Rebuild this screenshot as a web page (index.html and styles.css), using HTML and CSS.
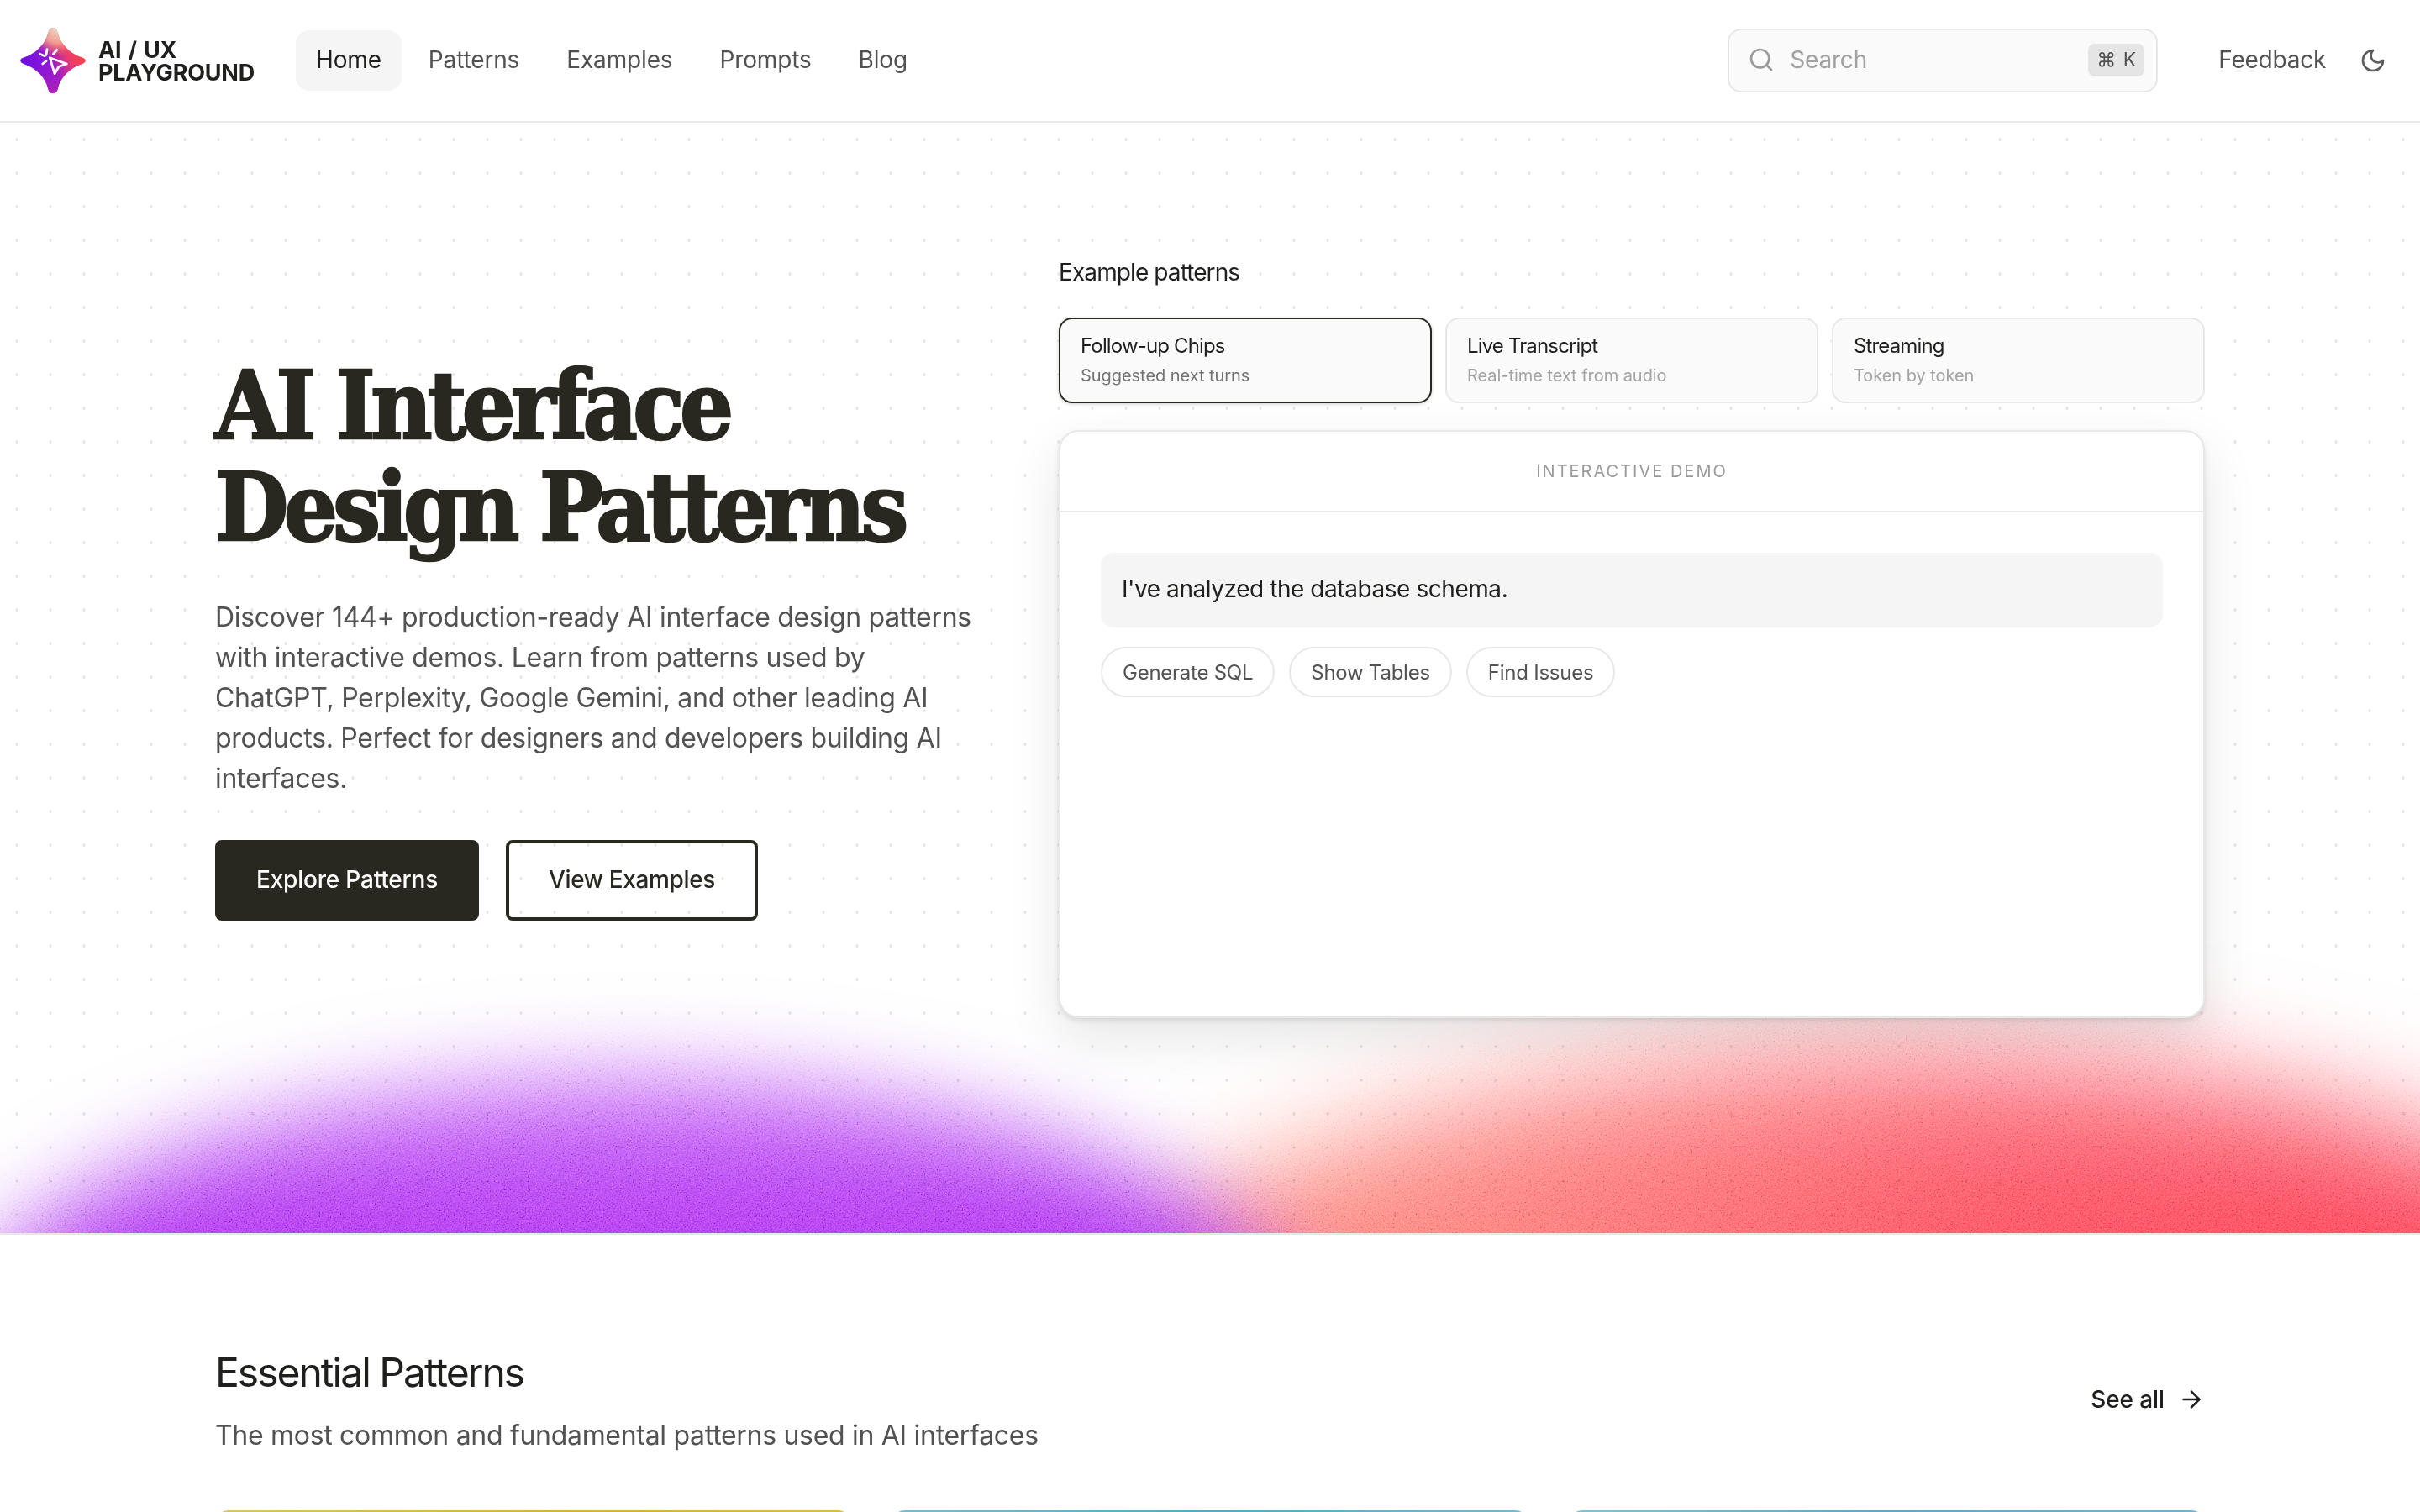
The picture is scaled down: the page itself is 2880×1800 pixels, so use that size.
FILE: index.html
```html
<!DOCTYPE html>
<html lang="en">
<head>
<meta charset="utf-8">
<title>AI / UX Playground</title>
<link rel="stylesheet" href="styles.css">
</head>
<body>
<header class="site-header">
  <a class="logo">
    <svg class="logo-mark" viewBox="0 0 80 80">
      <defs>
        <linearGradient id="lg-base" x1="0" y1="0.75" x2="1" y2="0.3">
          <stop offset="0" stop-color="#6208e0"/>
          <stop offset="0.45" stop-color="#8f18d8"/>
          <stop offset="0.72" stop-color="#e83c70"/>
          <stop offset="1" stop-color="#ff4438"/>
        </linearGradient>
        <linearGradient id="lg-bottom" x1="0.5" y1="1" x2="0.5" y2="0.55">
          <stop offset="0" stop-color="#b020b8"/>
          <stop offset="1" stop-color="#b020b8" stop-opacity="0"/>
        </linearGradient>
        <radialGradient id="lg-top" cx="0.56" cy="0.02" r="0.42">
          <stop offset="0" stop-color="#eadccc"/>
          <stop offset="0.5" stop-color="#f8b090" stop-opacity="0.85"/>
          <stop offset="1" stop-color="#ff7050" stop-opacity="0"/>
        </radialGradient>
      </defs>
      <path id="star" fill="url(#lg-base)" d="M40 1C43 1 45 4 46 8C49 20 60 32 75 36.500C80 38 80 42 75 44C60 49 49 60 46 73C45 77 43 79 40 79C37 79 35 77 34 73C31 60 20 49 5 44C0 42 0 38 5 36.500C20 32 31 20 34 8C35 4 37 1 40 1Z"/>
      <path fill="url(#lg-bottom)" d="M40 1C43 1 45 4 46 8C49 20 60 32 75 36.500C80 38 80 42 75 44C60 49 49 60 46 73C45 77 43 79 40 79C37 79 35 77 34 73C31 60 20 49 5 44C0 42 0 38 5 36.500C20 32 31 20 34 8C35 4 37 1 40 1Z"/>
      <path fill="url(#lg-top)" d="M40 1C43 1 45 4 46 8C49 20 60 32 75 36.500C80 38 80 42 75 44C60 49 49 60 46 73C45 77 43 79 40 79C37 79 35 77 34 73C31 60 20 49 5 44C0 42 0 38 5 36.500C20 32 31 20 34 8C35 4 37 1 40 1Z"/>
      <g fill="none" stroke="#fff" stroke-width="2.800" stroke-linecap="round" stroke-linejoin="round">
        <path d="M36.300 36.700L56.300 44L47 47.300L42 55.700Z"/>
        <path d="M32 33.300L33 26.700M24.300 32.300L30.300 34.700M27.700 44L32 40.700M40.300 32.300L44.700 27.300"/>
      </g>
    </svg>
    <span class="logo-text">AI / UX<br>PLAYGROUND</span>
  </a>
  <nav class="main-nav">
    <a class="nav-link is-active">Home</a>
    <a class="nav-link">Patterns</a>
    <a class="nav-link">Examples</a>
    <a class="nav-link">Prompts</a>
    <a class="nav-link">Blog</a>
  </nav>
  <div class="search">
    <svg class="search-icon" viewBox="0 0 24 24" fill="none" stroke="currentColor" stroke-width="2" stroke-linecap="round" stroke-linejoin="round"><circle cx="11" cy="11" r="8"/><path d="m21 21-4.300-4.300"/></svg>
    <span class="search-placeholder">Search</span>
    <kbd class="search-kbd">⌘ K</kbd>
  </div>
  <a class="feedback">Feedback</a>
  <svg class="theme-icon" viewBox="0 0 24 24" fill="none" stroke="currentColor" stroke-width="2" stroke-linecap="round" stroke-linejoin="round"><path d="M12 3a6 6 0 0 0 9 9 9 9 0 1 1-9-9Z"/></svg>
</header>

<section class="hero">
  <div class="blob blob-red"></div>
  <div class="blob blob-purple"></div>
  <svg class="grain" width="100%" height="100%">
    <filter id="grain-filter" x="0" y="0" width="100%" height="100%"><feTurbulence type="fractalNoise" baseFrequency="0.6" numOctaves="2"/><feColorMatrix type="matrix" values="1.1 1.1 0 0 -0.6  1.1 1.1 0 0 -0.6  1.1 1.1 0 0 -0.6  0 0 0 0 1"/></filter>
    <rect width="100%" height="100%" filter="url(#grain-filter)"/>
  </svg>
  <div class="dots"></div>

  <div class="hero-grid">
    <div class="hero-copy">
      <h1 class="hero-title">AI Interface<br>Design Patterns</h1>
      <p class="hero-lead">Discover 144+ production-ready AI interface design patterns with interactive demos. Learn from patterns used by ChatGPT, Perplexity, Google Gemini, and other leading AI products. Perfect for designers and developers building AI interfaces.</p>
      <div class="hero-actions">
        <a class="btn btn-solid">Explore Patterns</a>
        <a class="btn btn-outline">View Examples</a>
      </div>
    </div>
    <div class="hero-demo">
      <div class="demo-label">Example patterns</div>
      <div class="tabs">
        <div class="tab is-active"><div class="tab-name">Follow-up Chips</div><div class="tab-desc">Suggested next turns</div></div>
        <div class="tab"><div class="tab-name">Live Transcript</div><div class="tab-desc">Real-time text from audio</div></div>
        <div class="tab"><div class="tab-name">Streaming</div><div class="tab-desc">Token by token</div></div>
      </div>
      <div class="demo-card">
        <div class="demo-head">INTERACTIVE DEMO</div>
        <div class="demo-body">
          <div class="bubble">I've analyzed the database schema.</div>
          <div class="chips">
            <span class="chip">Generate SQL</span>
            <span class="chip">Show Tables</span>
            <span class="chip">Find Issues</span>
          </div>
        </div>
      </div>
    </div>
  </div>
</section>

<section class="essentials">
  <div class="section-head">
    <div>
      <h2 class="section-title">Essential Patterns</h2>
      <p class="section-sub">The most common and fundamental patterns used in AI interfaces</p>
    </div>
    <a class="see-all">See all
      <svg class="see-all-icon" viewBox="0 0 24 24" fill="none" stroke="currentColor" stroke-width="2" stroke-linecap="round" stroke-linejoin="round"><path d="M5 12h14"/><path d="m12 5 7 7-7 7"/></svg>
    </a>
  </div>
  <div class="cards">
    <div class="card card-gold"></div>
    <div class="card card-blue"></div>
    <div class="card card-teal"></div>
  </div>
</section>
</body>
</html>
```
FILE: styles.css
```css
* { box-sizing: border-box; }
html, body { margin: 0; height: 100%; overflow: hidden; }
body {
  font-family: Inter, "Liberation Sans", sans-serif;
  color: #1f1f1d;
  background: #fff;
}
a { color: inherit; text-decoration: none; }

.site-header {
  display: flex;
  align-items: center;
  height: 146px;
  padding: 0 40px 0 23px;
  border-bottom: 2px solid #e8e8e8;
  background: #fff;
}
.logo { display: flex; align-items: center; gap: 14px; width: 329px; }
.logo-mark { width: 80px; height: 80px; flex: none; }
.logo-text { margin-top: 2px; font-size: 27px; font-weight: 700; line-height: 27px; letter-spacing: -0.2px; word-spacing: 2px; color: #1f1f1d; }
.main-nav { display: flex; gap: 8px; }
.nav-link {
  display: flex; align-items: center;
  height: 72px; padding: 0 24px 2px;
  border-radius: 16px;
  font-size: 28px; letter-spacing: -0.15px; color: #525252;
}
.nav-link.is-active { background: #f5f5f5; color: #1f1f1d; }

.search {
  display: flex; align-items: center;
  width: 512px; height: 76px;
  margin-left: auto;
  padding: 0 14px 2px 22px;
  border: 2px solid #e8e8e8;
  border-radius: 16px;
  background: #fafafa;
}
.search-icon { width: 32px; height: 32px; color: #9a9a9a; flex: none; }
.search-placeholder { margin-left: 18px; font-size: 28px; letter-spacing: -0.2px; color: #a1a1a1; }
.search-kbd {
  display: flex; align-items: center; justify-content: center;
  width: 67px; height: 39px;
  margin-left: auto;
  border-radius: 8px;
  background: #e5e5e5;
  font-family: Inter, "DejaVu Sans", sans-serif;
  font-size: 23px; word-spacing: 2px; color: #525252;
}
.feedback { margin-left: 72px; margin-bottom: 2px; font-size: 28px; letter-spacing: -0.25px; color: #525252; }
.theme-icon { width: 32px; height: 32px; margin-left: 40px; color: #5c5c5c; flex: none; }

.hero {
  position: relative;
  height: 1322px;
  padding: 160px 256px 0;
  overflow: hidden;
  background: #fff;
}
.blob { position: absolute; border-radius: 50%; }
.blob-red {
  left: 1250px; top: 1100px;
  width: 2000px; height: 900px;
  background:
    linear-gradient(180deg, rgba(255,255,255,0.25) 0%, rgba(255,255,255,0) 24%),
    linear-gradient(90deg, #ff8c78 0%, #ff7a74 22%, #ff4454 55%, #ff3048 100%);
  filter: blur(64px);
}
.blob-purple {
  left: -60px; top: 1135px;
  width: 1624px; height: 700px;
  background: linear-gradient(180deg, #c25ef7 5%, #ab2cf0 27%);
  filter: blur(52px);
}
.grain {
  position: absolute; left: 0; top: 0;
  mix-blend-mode: soft-light;
  opacity: 0.75;
}
.dots {
  position: absolute; inset: 0;
  background-image: radial-gradient(circle at center, rgba(0,0,0,0.11) 0, rgba(0,0,0,0.09) 1.2px, transparent 2.4px);
  background-size: 40px 40px;
}
.hero-grid {
  position: relative;
  display: grid;
  grid-template-columns: 908px 1364px;
  gap: 96px;
  align-items: center;
}
.hero-title {
  margin: 0;
  font-family: "DejaVu Serif Condensed", "DejaVu Serif", serif;
  font-stretch: condensed;
  font-weight: 700;
  font-size: 112px;
  line-height: 121px;
  letter-spacing: -5.6px;
  color: #292820;
  -webkit-text-stroke: 2.5px #292820;
}
.hero-lead {
  margin: 47px 0 0;
  font-size: 32px;
  line-height: 48px;
  letter-spacing: -0.3px;
  color: #525252;
}
.hero-actions { display: flex; gap: 32px; margin-top: 49px; }
.btn {
  display: flex; align-items: center; justify-content: center;
  height: 96px;
  padding-bottom: 2px;
  border-radius: 8px;
  font-size: 28px; font-weight: 500; letter-spacing: -0.2px;
}
.btn-solid { width: 314px; background: #292820; color: #fff; }
.btn-outline { width: 300px; border: 4px solid #292820; color: #292820; letter-spacing: -0.35px; }

.demo-label { height: 40px; font-size: 28px; line-height: 36px; letter-spacing: -0.9px; color: #1f1f1d; }
.tabs { display: grid; grid-template-columns: repeat(3, 1fr); gap: 16px; margin-top: 32px; }
.tab {
  height: 102px;
  padding: 16px 24px 0;
  border: 2px solid #e8e8e8;
  border-radius: 16px;
  background: #fafafa;
}
.tab.is-active { border-color: #292820; box-shadow: 0 1px 4px rgba(0,0,0,0.18); }
.tab-name { font-size: 24px; line-height: 32px; letter-spacing: -0.85px; color: #1f1f1d; }
.tab-desc { margin-top: 4px; font-size: 20px; line-height: 30px; letter-spacing: -0.05px; color: #a3a3a3; }
.tab.is-active .tab-desc { color: #737373; }
.demo-card {
  height: 700px;
  margin-top: 32px;
  border: 2px solid #e8e8e8;
  border-radius: 24px;
  background: #fff;
  box-shadow: 0 24px 64px rgba(0,0,0,0.1), 0 3px 6px rgba(0,0,0,0.1);
}
.demo-head {
  display: flex; align-items: center; justify-content: center;
  height: 96px;
  border-bottom: 2px solid #e8e8e8;
  font-size: 20px; letter-spacing: 2px; color: #9a9a9a;
}
.demo-body { padding: 48px 48px; }
.bubble {
  display: flex; align-items: center;
  height: 89px; padding: 0 25px 4px;
  border-radius: 16px;
  background: #f5f5f5;
  font-size: 28px; letter-spacing: -0.44px; color: #1f1f1d;
}
.chips { display: flex; gap: 17px; margin-top: 23px; }
.chip {
  display: flex; align-items: center;
  height: 60px; padding: 0 24px;
  border: 2px solid #e8e8e8;
  border-radius: 30px;
  font-size: 24px; letter-spacing: -0.25px; color: #525252;
}

.essentials {
  height: 332px;
  overflow: hidden;
  padding: 128px 256px 0;
  border-top: 2px solid #e8e8e8;
  background: #fff;
}
.section-head { display: flex; align-items: center; justify-content: space-between; }
.section-title { margin: 0; font-size: 48px; line-height: 72px; font-weight: 400; letter-spacing: -2px; color: #1f1f1d; }
.section-sub { margin: 15px 0 0; font-size: 32px; line-height: 48px; letter-spacing: -0.3px; color: #525252; }
.see-all { display: flex; align-items: center; gap: 16px; font-size: 28px; font-weight: 500; letter-spacing: -0.1px; color: #1f1f1d; }
.see-all-icon { width: 32px; height: 32px; flex: none; }
.cards { display: grid; grid-template-columns: repeat(3, 1fr); gap: 48px; margin-top: 65px; }
.card { height: 300px; border-radius: 16px; }
.card-gold { background: linear-gradient(90deg, #d8c468, #d9ae3e 60%, #dcb858); }
.card-blue { background: linear-gradient(90deg, #78bcd4, #52aac8 50%, #74b8d4); }
.card-teal { background: linear-gradient(90deg, #80c4d4, #5ca8cc 50%, #70b4d4); }
```
